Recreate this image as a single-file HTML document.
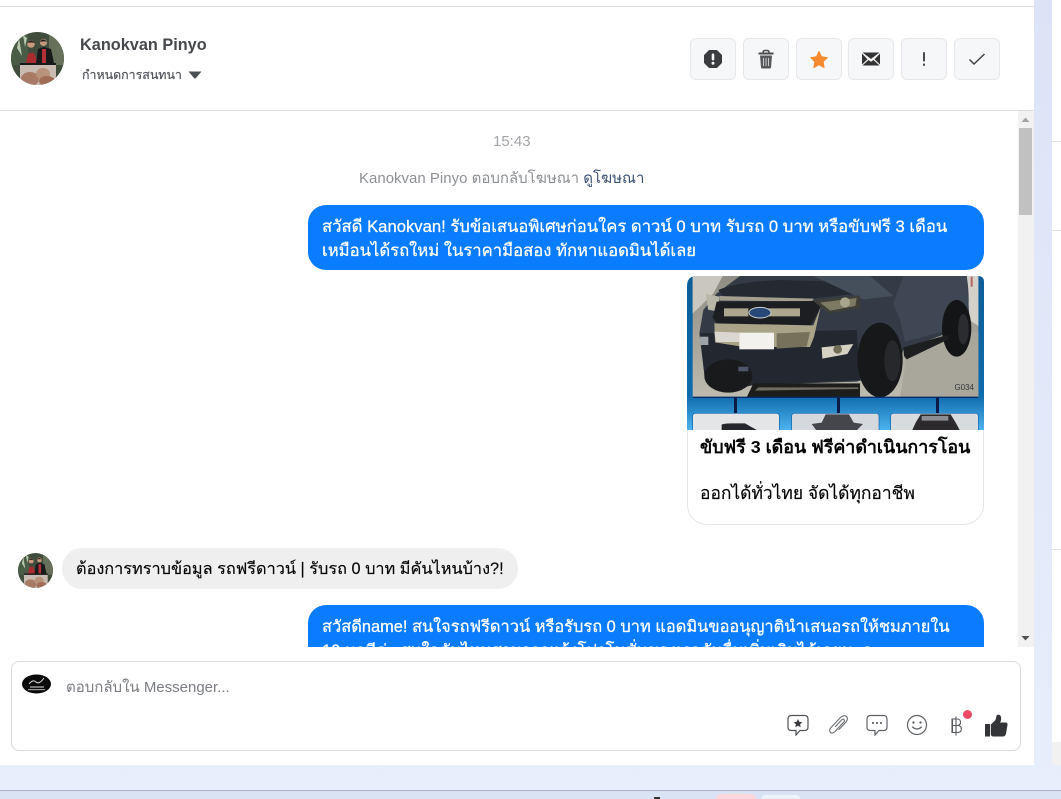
<!DOCTYPE html>
<html lang="th"><head><meta charset="utf-8"><title>Inbox</title>
<style>
html,body{margin:0;padding:0;width:1061px;height:799px;overflow:hidden;background:#e3ebfa}
body{position:relative;font-family:"Liberation Sans","Noto Sans CJK SC",sans-serif;color:#050505}
.a{position:absolute}
.t{position:absolute;white-space:nowrap;-webkit-text-stroke:.15px currentColor}
.btn{position:absolute;top:38px;width:44px;height:40px;background:#f6f7f9;border:1px solid #e6e7ea;border-radius:6px;display:flex;align-items:center;justify-content:center}
.bubble{position:absolute;background:#0a7cff;color:#fff;border-radius:18px;line-height:24px;-webkit-text-stroke:.25px #fff}
.bubble div{position:absolute;left:14px;white-space:nowrap}
</style></head><body>
<div class="a" style="left:0;top:0;width:1061px;height:791px;background:linear-gradient(#dde3f6,#e2eafa 60%,#e7effc)"></div>
<div class="a" style="left:0;top:0;width:1034px;height:765px;background:#fff"></div>
<div class="a" style="left:0;top:6px;width:1034px;height:1px;background:#dedfe1"></div>
<div class="a" style="left:0;top:110px;width:1034px;height:1px;background:#dadde1"></div>
<div class="a" style="left:1052px;top:0;width:9px;height:742px;background:#fff"></div>
<div class="a" style="left:1052px;top:141px;width:9px;height:1px;background:#e2e3e5"></div>
<div class="a" style="left:1052px;top:230px;width:9px;height:1px;background:#e2e3e5"></div>
<div class="a" style="left:1052px;top:549px;width:9px;height:1px;background:#e2e3e5"></div>
<div class="a" style="left:1052px;top:742px;width:9px;height:23px;background:#f1f1f1"></div>
<div class="a" style="left:0;top:790px;width:1061px;height:1px;background:#a9b2c2"></div>
<div class="a" style="left:0;top:791px;width:1061px;height:8px;background:#dae3f3"></div>
<div class="a" style="left:716px;top:794px;width:40px;height:5px;background:#fbd8dc;border-radius:5px 5px 0 0"></div>
<div class="a" style="left:762px;top:795px;width:38px;height:4px;background:#eef2fb;border-radius:3px 3px 0 0"></div>
<div class="a" style="left:654px;top:797px;width:6px;height:2px;background:#333"></div>

<svg class="a" style="left:11px;top:32px" width="53" height="53" viewBox="0 0 53 53">
<defs><clipPath id="c1"><circle cx="26.500" cy="26.500" r="26.500"/></clipPath>
<g id="av" clip-path="url(#c1)">
<rect width="53" height="53" fill="#414d3c"/>
<rect x="0" width="17" height="33" fill="#4b5c46"/><path d="M8 6l3 18-5-8zM12 3l2 12 2-9z" fill="#b9c9b2"/>
<rect x="38" width="15" height="33" fill="#67705a"/>
<rect x="9" y="33" width="36" height="20" fill="#c9bbb1"/>
<rect x="9" y="31" width="36" height="2" fill="#17191a"/>
<ellipse cx="19" cy="47" rx="9" ry="7" fill="#a87a66"/><ellipse cx="32" cy="42" rx="7" ry="6" fill="#b9927c"/><ellipse cx="36" cy="49" rx="8" ry="5" fill="#a06c55"/>
<path d="M15 31l2-9q3-2 6-1l4 10z" fill="#a92c31"/><circle cx="20" cy="12" r="3.800" fill="#c99a80"/><path d="M16 11q4-5 8 0-4-1-8 0z" fill="#2b2320"/>
<path d="M25 31l2-14 6-2 7 2 3 14z" fill="#17191a"/><rect x="31" y="17" width="4" height="14" fill="#b52f36"/><circle cx="32.500" cy="10.500" r="3.600" fill="#c39a80"/><path d="M29 10q3-5 7 0-3-1.500-7 0z" fill="#1f1a18"/>
</g></defs>
<use href="#av"/></svg>
<div class="t" style="left:80px;top:35px;font-size:16.300px;line-height:20px;font-weight:700;color:#45484c;-webkit-text-stroke:0">Kanokvan Pinyo</div>
<div class="t" style="left:82px;top:66px;font-size:12.400px;line-height:18px;color:#4b4f56">กำหนดการสนทนา</div>
<svg class="a" style="left:188px;top:71px" width="14" height="8" viewBox="0 0 14 8"><path d="M0.500 0.500h13l-5.500 6.500q-1 1-2 0z" fill="#4b4f56"/></svg>

<div class="btn" style="left:690px"><svg width="20" height="20" viewBox="0 0 20 20"><path d="M6.500 2h7L18 6.500v7L13.500 18h-7L2 13.500v-7z" fill="#3a3c3f" stroke="#3a3c3f" stroke-width="2" stroke-linejoin="round"/><rect x="8.700" y="4.500" width="2.600" height="7" rx="1.200" fill="#f6f7f9"/><circle cx="10" cy="14.300" r="1.500" fill="#f6f7f9"/></svg></div>
<div class="btn" style="left:743px"><svg width="18" height="20" viewBox="0 0 18 20"><path d="M1.500 3.500h15v2h-15z" fill="#4b4c4f"/><path d="M6 3.500q0-2 2-2h2q2 0 2 2" fill="none" stroke="#4b4c4f" stroke-width="1.500"/><path d="M3 6.500h12l-1 12q-.1 1-1 1H5q-1 0-1-1z" fill="#57585b"/><path d="M6.500 9v8M9 9v8M11.500 9v8" stroke="#c9cacc" stroke-width="1"/></svg></div>
<div class="btn" style="left:796px"><svg width="20" height="19" viewBox="0 0 20 19"><path d="M10 1.500l2.500 5.300 5.800.8-4.200 4 1 5.900L10 14.700l-5.100 2.800 1-5.900-4.200-4 5.800-.8z" fill="#f58a2e" stroke="#f58a2e" stroke-width="1" stroke-linejoin="round"/></svg></div>
<div class="btn" style="left:848px"><svg width="18" height="14" viewBox="0 0 18 14"><path d="M0.500 0.500h17L9 7z" fill="#333"/><path d="M0.500 13.500h17L11.500 8 9 9.800 6.500 8z" fill="#333"/><path d="M0 1.500v11L5.500 7.200zM18 1.500v11l-5.500-5.300z" fill="#333"/></svg></div>
<div class="btn" style="left:901px"><svg width="6" height="18" viewBox="0 0 6 18"><rect x="2" y="2" width="2" height="9.500" rx=".8" fill="#4b4c4f"/><rect x="2" y="13.500" width="2" height="2.400" rx=".6" fill="#4b4c4f"/></svg></div>
<div class="btn" style="left:954px"><svg width="18" height="14" viewBox="0 0 18 14"><path d="M1.500 7.500l4.500 4.500L16.500 2" fill="none" stroke="#3f4144" stroke-width="1.500"/></svg></div>

<div class="t" style="left:493px;top:133px;font-size:15px;line-height:18px;color:#a3a5a8;-webkit-text-stroke:0">15:43</div>
<div class="t" style="left:359px;top:170px;font-size:15px;line-height:18px;color:#8d9095;-webkit-text-stroke:0">Kanokvan Pinyo ตอบกลับโฆษณา <span style="color:#3b5173">ดูโฆษณา</span></div>

<div class="bubble" style="left:308px;top:205px;width:676px;height:65px;font-size:16.650px">
<div style="top:10px">สวัสดี Kanokvan! รับข้อเสนอพิเศษก่อนใคร ดาวน์ 0 บาท รับรถ 0 บาท หรือขับฟรี 3 เดือน</div>
<div style="top:34px">เหมือนได้รถใหม่ ในราคามือสอง ทักหาแอดมินได้เลย</div></div>

<div class="a" style="left:687px;top:276px;width:295px;height:248px;border:1px solid #e4e6e9;border-top:0;border-radius:10px 10px 20px 20px;background:#fff"></div>
<svg class="a" style="left:687px;top:276px" width="297" height="154" viewBox="0 0 297 154">
<defs>
<linearGradient id="bg" x1="0" y1="0" x2="0" y2="1"><stop offset="0" stop-color="#0c5d97"/><stop offset=".78" stop-color="#0f6bad"/><stop offset="1" stop-color="#4db4ef"/></linearGradient>
<linearGradient id="fl" x1="0" y1="0" x2="0" y2="1"><stop offset="0" stop-color="#8f8d84"/><stop offset="1" stop-color="#bdbbaf"/></linearGradient>
<clipPath id="c2"><path d="M0 10q0-10 10-10h281q6 0 6 6v148H0z"/></clipPath>
</defs>
<g clip-path="url(#c2)">
<rect width="297" height="154" fill="url(#bg)"/>
<g transform="translate(-7,-6) scale(.33333)">
<rect x="38" y="18" width="857" height="365" fill="url(#fl)"/>
<path d="M38 18h90L100 70 60 110 38 130z" fill="#c9c7bf"/>
<path d="M860 18h35v150l-30-20z" fill="#d3d1ca"/><rect x="872" y="20" width="6" height="30" fill="#b7635e"/>
<!-- body -->
<path d="M110 70L180 18H860Q872 90 860 165L800 190 670 240 650 300 530 335 220 345 130 365 75 330 58 190 70 120 Z" fill="#343b46"/>
<path d="M670 18H860L868 140 805 180 675 215 660 150 640 100Z" fill="#3f4754"/>
<path d="M115 60Q170 35 300 30L480 35 540 70 400 85 130 80Z" fill="#252a32"/>
<path d="M400 18h170l70 60-90 10z" fill="#454e5b"/>
<!-- lower bumper & left tire -->
<path d="M60 190L530 180 540 330 220 345 130 365 75 330z" fill="#23272f"/>
<ellipse cx="145" cy="318" rx="72" ry="50" fill="#191a1b"/>
<path d="M118 78l282 8 0 8-282-2z" fill="#a39e8e"/>
<!-- headlight -->
<path d="M395 92l145-16-2 38-90 16z" fill="#3e3f36"/><path d="M420 98l110-14-4 24-75 14z" fill="#7c7a62"/><circle cx="495" cy="97" r="15" fill="#a8a68c"/>
<path d="M78 72l40 8-4 45-30-6z" fill="#b9b7a8"/>
<!-- grille -->
<path d="M110 95l290-2 22 18-32 60-270 2-22-30z" fill="#1c1e22"/>
<path d="M132 115h228v24H132z" fill="#ada78f"/><path d="M205 115h60v24h-60z" fill="#1d2024"/>
<ellipse cx="240" cy="128" rx="33" ry="16" fill="#284978" stroke="#c9ccce" stroke-width="3"/>
<!-- chrome -->
<path d="M103 160l297 6 22-55-20 90-12 30H290l-110-2-75-12z" fill="#a9a388"/>
<path d="M103 185l75 3v28h-70z" fill="#d9d7d0"/>
<path d="M290 190l100-4-10 44-90 6z" fill="#75715b"/>
<rect x="178" y="188" width="104" height="50" fill="#f2f1ee"/>
<rect x="60" y="200" width="25" height="25" fill="#9ea3a8"/>
<!-- fog -->
<path d="M425 232l95-10-18 30-75 14z" fill="#d5d1c3"/><circle cx="473" cy="238" r="13" fill="#706d57"/>
<rect x="175" y="290" width="30" height="14" fill="#50566a"/>
<!-- floor shadow -->
<path d="M220 340h320v42H200z" fill="#1d1d1b"/><path d="M235 352h300v5l-310 5z" fill="#6f6d62"/>
<!-- right floor, step, wheels -->
<path d="M680 258l190-70 25 0v195H660z" fill="#a9a79b"/>
<ellipse cx="830" cy="175" rx="44" ry="85" fill="#141517"/><ellipse cx="850" cy="178" rx="16" ry="46" fill="#2a2c30"/>
<path d="M670 232l135-38v14l-125 60-8-10z" fill="#1c1e20"/>
<ellipse cx="600" cy="270" rx="68" ry="112" fill="#17181a"/><ellipse cx="637" cy="272" rx="24" ry="62" fill="#26282b"/>
<path d="M38 382h857" stroke="#0a2a6a" stroke-width="4"/>
<text x="882" y="360" font-size="24" fill="#33383d" font-family="Liberation Sans" text-anchor="end">G034</text>
<rect x="162" y="383" width="9" height="47" fill="#0a1b45"/><rect x="471" y="383" width="9" height="47" fill="#0a1b45"/><rect x="768" y="383" width="9" height="47" fill="#0a1b45"/>
<rect x="38" y="430" width="260" height="60" rx="8" fill="#e3e5e7" stroke="#0e63ac" stroke-width="2"/>
<rect x="335" y="430" width="262" height="60" rx="8" fill="#d5d9dd" stroke="#0e63ac" stroke-width="2"/>
<rect x="632" y="430" width="263" height="60" rx="8" fill="#d8dbde" stroke="#0e63ac" stroke-width="2"/>
<path d="M125 480v-16q5-4 30-4h40l35 20z" fill="#25272c"/>
<path d="M395 462l30-4 12-25h70l14 25 28 4-20 20H410z" fill="#44464b"/>
<path d="M697 480l10-22 15-25h90l15 25 12 22z" fill="#2c2a2d"/><path d="M725 438h80v14h-80z" fill="#8c8d92"/>
</g>
</g></svg>
<div class="t" style="left:700px;top:435px;font-size:17.850px;line-height:24px;font-weight:700;color:#050505;-webkit-text-stroke:0">ขับฟรี 3 เดือน ฟรีค่าดำเนินการโอน</div>
<div class="t" style="left:700px;top:481px;font-size:17.400px;line-height:24px;color:#050505">ออกได้ทั่วไทย จัดได้ทุกอาชีพ</div>

<svg class="a" style="left:18px;top:553px" width="35" height="35" viewBox="0 0 53 53"><use href="#av"/></svg>
<div class="a" style="left:62px;top:548px;width:456px;height:41px;border-radius:20px;background:#efefef"></div>
<div class="t" style="left:76px;top:557px;font-size:16.300px;line-height:24px;color:#050505">ต้องการทราบข้อมูล รถฟรีดาวน์ | รับรถ 0 บาท มีคันไหนบ้าง?!</div>

<div class="a" style="left:0;top:600px;width:1018px;height:47px;overflow:hidden">
<div class="bubble" style="left:308px;top:5px;width:676px;height:80px;font-size:16.400px">
<div style="top:10px">สวัสดีname! สนใจรถฟรีดาวน์ หรือรับรถ 0 บาท แอดมินขออนุญาตินำเสนอรถให้ชมภายใน</div>
<div style="top:34px">10 นาทีค่ะ สนใจคันไหนสามารถแจ้งโปรโมชั่นของเราคันอื่นเพิ่มเติมได้เลยนะคะ</div></div></div>

<div class="a" style="left:1018px;top:111px;width:16px;height:536px;background:#f1f1f1"></div>
<div class="a" style="left:1019px;top:128px;width:13px;height:87px;background:#c1c1c1"></div>
<svg class="a" style="left:1021px;top:117px" width="9" height="6"><path d="M0.500 5L4.500 0.500 8.500 5z" fill="#a3a3a3"/></svg>
<svg class="a" style="left:1021px;top:635px" width="9" height="6"><path d="M0.500 1L4.500 5.500 8.500 1z" fill="#505050"/></svg>

<div class="a" style="left:11px;top:661px;width:1008px;height:88px;border:1px solid #dcdcdc;border-radius:8px;background:#fff"></div>
<svg class="a" style="left:22px;top:674px" width="29" height="20" viewBox="0 0 29 20"><ellipse cx="14.500" cy="10" rx="14.500" ry="9.500" fill="#0a0a0a"/><path d="M7 10q4-5 7-2t8-4M8 13h14" stroke="#ddd" stroke-width="1" fill="none"/><rect x="6" y="15" width="17" height="1.200" fill="#999"/></svg>
<div class="t" style="left:66px;top:679px;font-size:15px;line-height:18px;color:#7a7d82;-webkit-text-stroke:0">ตอบกลับใน Messenger...</div>

<svg class="a" style="left:787px;top:714px" width="22" height="22" viewBox="0 0 22 22"><path d="M4.500 1.500h13q3.500 0 3.500 3.500v8q0 3.500-3.500 3.500H13l-4 4.500v-4.500H4.500Q1 16.500 1 13V5q0-3.500 3.500-3.500z" fill="none" stroke="#4f5256" stroke-width="1.200"/><path d="M11 5l1.300 2.800 3 .4-2.200 2.100.6 3-2.700-1.500-2.700 1.500.6-3-2.200-2.100 3-.4z" fill="#3a3c3f"/></svg>
<svg class="a" style="left:827px;top:714px" width="22" height="22" viewBox="0 0 22 22"><path d="M8.500 12.500L14.500 6Q16 4.600 17 5.600 18 6.600 16.800 8L8 17.500Q5.500 20 3.500 18.500 1.500 16.500 4 13.500L13.500 3.500Q17 .5 19.500 2.500 21.500 4.800 19 8L12 15.500" fill="none" stroke="#6a6d71" stroke-width="1.100" stroke-linecap="round"/></svg>
<svg class="a" style="left:866px;top:714px" width="22" height="22" viewBox="0 0 22 22"><path d="M4.500 1.500h13q3.500 0 3.500 3.500v8q0 3.500-3.500 3.500H13l-4 4.500v-4.500H4.500Q1 16.500 1 13V5q0-3.500 3.500-3.500z" fill="none" stroke="#5f6266" stroke-width="1.200"/><circle cx="7" cy="9" r="1" fill="#4b4c4f"/><circle cx="11" cy="9" r="1" fill="#4b4c4f"/><circle cx="15" cy="9" r="1" fill="#4b4c4f"/></svg>
<svg class="a" style="left:906px;top:714px" width="22" height="22" viewBox="0 0 22 22"><circle cx="11" cy="11" r="9.500" fill="none" stroke="#5f6266" stroke-width="1.200"/><circle cx="7.500" cy="8.500" r="1.100" fill="#4b4c4f"/><circle cx="14.500" cy="8.500" r="1.100" fill="#4b4c4f"/><path d="M6.500 13q4.500 4 9 0" fill="none" stroke="#5f6266" stroke-width="1.200" stroke-linecap="round"/></svg>
<svg class="a" style="left:950px;top:715px" width="13" height="22" viewBox="0 0 13 22"><path d="M2 4h5q3.500 0 3.500 3.200T7 10.500H2zM2 10.500h5.500q3.800 0 3.800 3.500t-3.800 3.500H2zM2.500 4v13.500M6 1.500v19" fill="none" stroke="#55585c" stroke-width="1.100"/></svg>
<div class="a" style="left:963px;top:710px;width:9px;height:9px;border-radius:50%;background:#ee4a66"></div>
<svg class="a" style="left:984px;top:714px" width="24" height="23" viewBox="0 0 24 23"><rect x="1" y="10" width="5" height="12.500" fill="#333437"/><path d="M6.800 10.500L11.500 6 12.800 1Q16.500 0 17 3.200T16 8.500H21.500Q23.800 8.500 23.500 11L22 19.500Q21.500 22.500 18.500 22.500H9.500Q6.800 22.500 6.800 20z" fill="#333437"/></svg>
</body></html>
